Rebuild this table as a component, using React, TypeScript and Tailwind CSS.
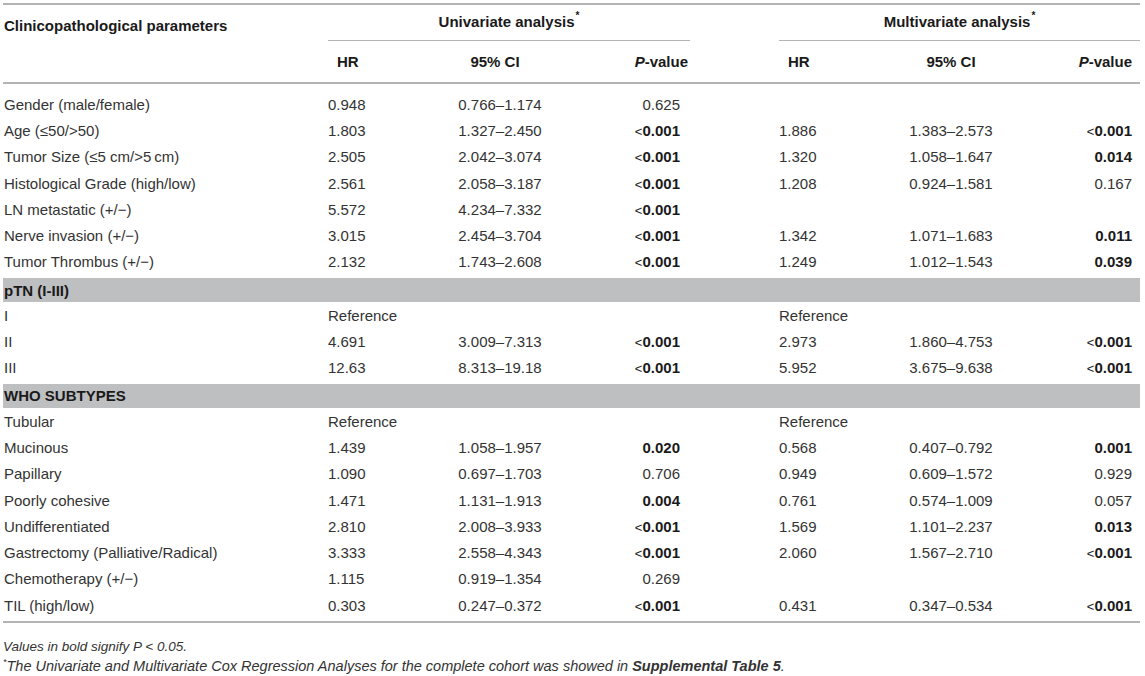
import React from "react";

type Row = {
  label: string;
  hr?: string;
  ci?: string;
  p?: string;
  pb?: boolean;
  mhr?: string;
  mci?: string;
  mp?: string;
  mpb?: boolean;
};

type Section = { band?: string; rows: Row[] };

const sections: Section[] = [
  {
    rows: [
      { label: "Gender (male/female)", hr: "0.948", ci: "0.766–1.174", p: "0.625" },
      { label: "Age (≤50/>50)", hr: "1.803", ci: "1.327–2.450", p: "<0.001", pb: true, mhr: "1.886", mci: "1.383–2.573", mp: "<0.001", mpb: true },
      { label: "Tumor Size (≤5 cm/>5\u2009cm)", hr: "2.505", ci: "2.042–3.074", p: "<0.001", pb: true, mhr: "1.320", mci: "1.058–1.647", mp: "0.014", mpb: true },
      { label: "Histological Grade (high/low)", hr: "2.561", ci: "2.058–3.187", p: "<0.001", pb: true, mhr: "1.208", mci: "0.924–1.581", mp: "0.167" },
      { label: "LN metastatic (+/−)", hr: "5.572", ci: "4.234–7.332", p: "<0.001", pb: true },
      { label: "Nerve invasion (+/−)", hr: "3.015", ci: "2.454–3.704", p: "<0.001", pb: true, mhr: "1.342", mci: "1.071–1.683", mp: "0.011", mpb: true },
      { label: "Tumor Thrombus (+/−)", hr: "2.132", ci: "1.743–2.608", p: "<0.001", pb: true, mhr: "1.249", mci: "1.012–1.543", mp: "0.039", mpb: true },
    ],
  },
  {
    band: "pTN (I-III)",
    rows: [
      { label: "I", hr: "Reference", mhr: "Reference" },
      { label: "II", hr: "4.691", ci: "3.009–7.313", p: "<0.001", pb: true, mhr: "2.973", mci: "1.860–4.753", mp: "<0.001", mpb: true },
      { label: "III", hr: "12.63", ci: "8.313–19.18", p: "<0.001", pb: true, mhr: "5.952", mci: "3.675–9.638", mp: "<0.001", mpb: true },
    ],
  },
  {
    band: "WHO SUBTYPES",
    rows: [
      { label: "Tubular", hr: "Reference", mhr: "Reference" },
      { label: "Mucinous", hr: "1.439", ci: "1.058–1.957", p: "0.020", pb: true, mhr: "0.568", mci: "0.407–0.792", mp: "0.001", mpb: true },
      { label: "Papillary", hr: "1.090", ci: "0.697–1.703", p: "0.706", mhr: "0.949", mci: "0.609–1.572", mp: "0.929" },
      { label: "Poorly cohesive", hr: "1.471", ci: "1.131–1.913", p: "0.004", pb: true, mhr: "0.761", mci: "0.574–1.009", mp: "0.057" },
      { label: "Undifferentiated", hr: "2.810", ci: "2.008–3.933", p: "<0.001", pb: true, mhr: "1.569", mci: "1.101–2.237", mp: "0.013", mpb: true },
      { label: "Gastrectomy (Palliative/Radical)", hr: "3.333", ci: "2.558–4.343", p: "<0.001", pb: true, mhr: "2.060", mci: "1.567–2.710", mp: "<0.001", mpb: true },
      { label: "Chemotherapy (+/−)", hr: "1.115", ci: "0.919–1.354", p: "0.269" },
      { label: "TIL (high/low)", hr: "0.303", ci: "0.247–0.372", p: "<0.001", pb: true, mhr: "0.431", mci: "0.347–0.534", mp: "<0.001", mpb: true },
    ],
  },
];

const GRID = "grid grid-cols-[325px_92px_160px_110px_89px_91px_162px_108px]";

function PVal({ v, bold }: { v?: string; bold?: boolean }) {
  if (!v) return null;
  if (bold) {
    if (v.startsWith("<")) {
      return (
        <span className="font-bold text-[#1a1a1a]">
          <span className="font-normal text-[13px]">&lt;</span>
          {v.slice(1)}
        </span>
      );
    }
    return <span className="font-bold text-[#1a1a1a]">{v}</span>;
  }
  return <span>{v}</span>;
}

function DataRow({ r }: { r: Row }) {
  return (
    <div className={`${GRID} h-[26.3px] items-center`}>
      <div className="pl-[1px] whitespace-nowrap">{r.label}</div>
      <div className="whitespace-nowrap">{r.hr}</div>
      <div className="text-center whitespace-nowrap">{r.ci}</div>
      <div className="text-right pr-[10px] whitespace-nowrap">
        <PVal v={r.p} bold={r.pb} />
      </div>
      <div />
      <div className="whitespace-nowrap">{r.mhr}</div>
      <div className="text-center whitespace-nowrap">{r.mci}</div>
      <div className="text-right pr-[8px] whitespace-nowrap">
        <PVal v={r.mp} bold={r.mpb} />
      </div>
    </div>
  );
}

function PHeader() {
  return (
    <span className="font-bold">
      <span className="italic">P</span>-value
    </span>
  );
}

function Star() {
  return <span className="inline-block align-top text-[10px] font-bold leading-none -mt-[3px] ml-[1px]">*</span>;
}

export default function App() {
  return (
    <div
      className="w-[1145px] h-[676px] bg-white text-[#333333] text-[15px] leading-none overflow-hidden"
      style={{ fontFamily: '"Liberation Sans", Arial, Helvetica, sans-serif' }}
    >
      <div className="pt-[3px] pl-[3px] w-[1140px]">
        <div className="h-[2px] bg-[#b4b4b4]" />
        {/* header row 1 */}
        <div className={`${GRID} h-[36px] text-[#1a1a1a] font-bold`}>
          <div className="pl-[1px] flex items-center pt-[4px]">Clinicopathological parameters</div>
          <div className="col-span-3 flex items-center justify-center border-b border-[#b4b4b4] pb-[2px]">
            <span>
              Univariate analysis
              <Star />
            </span>
          </div>
          <div />
          <div className="col-span-3 flex items-center justify-center border-b border-[#b4b4b4] pb-[2px]">
            <span>
              Multivariate analysis
              <Star />
            </span>
          </div>
        </div>
        {/* header row 2 */}
        <div className={`${GRID} h-[41px] items-center text-[#1a1a1a] font-bold`}>
          <div />
          <div className="pl-[9px]">HR</div>
          <div className="text-center pr-[10px]">95% CI</div>
          <div className="text-right pr-[2px]">
            <PHeader />
          </div>
          <div />
          <div className="pl-[9px]">HR</div>
          <div className="text-center">95% CI</div>
          <div className="text-right pr-[8px]">
            <PHeader />
          </div>
        </div>
        <div className="h-[2px] bg-[#b4b4b4]" />
        <div className="pt-[7px]">
          {sections.map((s, i) => (
            <div key={i}>
              {s.band && (
                <div className="mt-[3px] h-[24px] bg-[#bdbfc1] flex items-center pl-[1px] font-bold text-[#1a1a1a]">
                  {s.band}
                </div>
              )}
              {s.rows.map((r, j) => (
                <DataRow key={j} r={r} />
              ))}
            </div>
          ))}
        </div>
        <div className="mt-[3px] h-[2px] bg-[#b4b4b4]" />
        <div className="pt-[14px] italic text-[#333333]">
          <div className="h-[19px] flex items-center text-[13.5px]">Values in bold signify P &lt; 0.05.</div>
          <div className="h-[20px] flex items-center text-[14.5px]">
            <span>
              <span className="inline-block align-top text-[9px] -mt-[1px]">*</span>The Univariate and Multivariate Cox Regression Analyses for the complete cohort was showed in{" "}
              <span className="font-bold">Supplemental Table 5</span>.
            </span>
          </div>
        </div>
      </div>
    </div>
  );
}
